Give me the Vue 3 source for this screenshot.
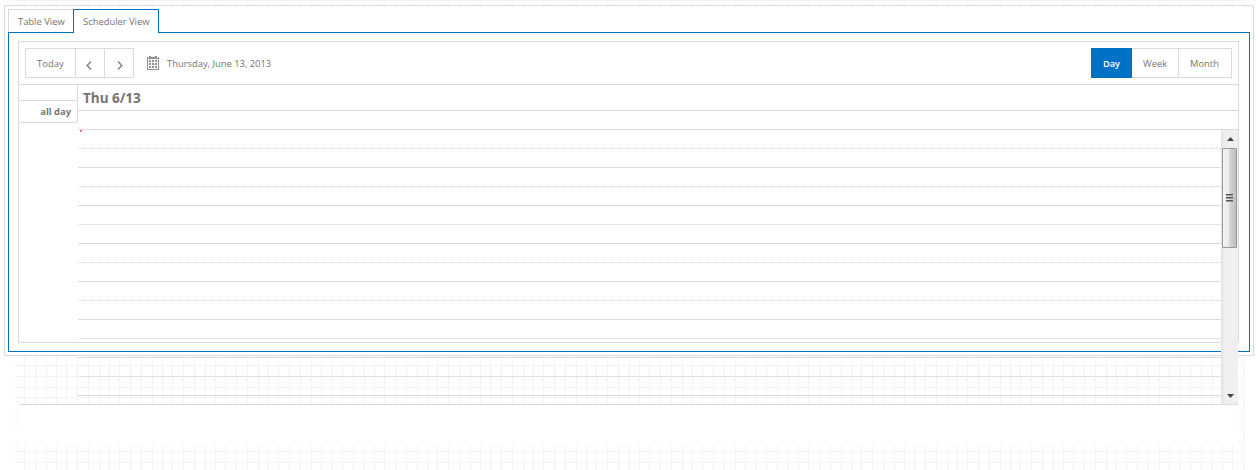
<script setup>
import { reactive } from 'vue'

const state = reactive({
  tab: 'Scheduler View',
  view: 'Day'
})

const tabs = ['Table View', 'Scheduler View']
const views = ['Day', 'Week', 'Month']

// uneven cell offsets of the background grid
const columns = [0, 11, 22, 32, 42]
const lines = [0, 11, 22, 32]
</script>

<template>
  <div class="page">
    <svg class="grid" width="1230" height="470" shape-rendering="crispEdges">
      <defs>
        <pattern id="cols" x="10" y="0" width="53" height="470" patternUnits="userSpaceOnUse">
          <rect v-for="x in columns" :key="x" :x="x" width="1" height="470" />
        </pattern>
        <pattern id="rows" x="0" y="-22" width="1230" height="43" patternUnits="userSpaceOnUse">
          <rect v-for="y in lines" :key="y" :y="y" width="1230" height="1" />
        </pattern>
      </defs>
      <rect width="1230" height="470" fill="url(#rows)" />
      <rect width="1230" height="470" fill="url(#cols)" />
    </svg>

    <div class="tabstrip">
      <div class="tabs">
        <div
          v-for="tab in tabs"
          :key="tab"
          class="tab"
          :class="{ active: tab === state.tab }"
          @click="state.tab = tab"
        ><span class="text">{{ tab }}</span></div>
      </div>

      <div class="tab-content">
        <div class="scheduler">
          <div class="toolbar">
            <div class="nav">
              <div class="today"><span class="text">Today</span></div>
              <div class="arrow prev">
                <svg width="6" height="9"><path d="M5 .6 1.2 4.5 5 8.4" /></svg>
              </div>
              <div class="arrow next">
                <svg width="6" height="9"><path d="M1 .6 4.8 4.5 1 8.4" /></svg>
              </div>
            </div>
            <svg class="calendar" width="12" height="14" shape-rendering="crispEdges">
              <path d="M0 1h1v13H0zM11 1h1v13h-1zM1 13h10v1H1zM1 2h10v1H1zM2 0h2v2H2zM8 0h2v2H8zM4 1h4v1H4z" />
              <path d="M2 4h2v2H2zM5 4h2v2H5zM8 4h2v2H8zM2 7h2v2H2zM5 7h2v2H5zM8 7h2v2H8zM2 10h2v2H2zM5 10h2v2H5zM8 10h2v2H8z" />
            </svg>
            <span class="date text">Thursday, June 13, 2013</span>
            <div class="views">
              <div
                v-for="view in views"
                :key="view"
                class="view"
                :class="[view.toLowerCase(), { selected: view === state.view }]"
                @click="state.view = view"
              ><span class="text">{{ view }}</span></div>
            </div>
          </div>

          <div class="body">
            <div class="times">
              <div class="corner"></div>
              <div class="all-day"><span class="text">all day</span></div>
            </div>
            <div class="days">
              <div class="day-header"><span class="text">Thu 6/13</span></div>
              <div class="all-day-slot"></div>
              <div class="content">
                <div class="slots">
                  <div v-for="n in 14" :key="n" class="slot"></div>
                  <div class="marker"></div>
                </div>
                <div class="scrollbar">
                  <svg class="up" width="7" height="4"><path d="M3.5 0 7 4H0z" /></svg>
                  <div class="thumb"><i></i><i></i><i></i></div>
                  <svg class="down" width="7" height="4"><path d="M0 0h7L3.5 4z" /></svg>
                </div>
              </div>
            </div>
          </div>
          <div class="footer"></div>
        </div>
      </div>
    </div>
  </div>
</template>

<style>
body {
  margin: 0;
  background: #fff;
}
</style>

<style scoped>
.page {
  position: relative;
  box-sizing: border-box;
  width: 1260px;
  height: 470px;
  padding: 5px 0 0 4px;
  overflow: hidden;
  font-family: 'Open Sans', 'Noto Sans', sans-serif;
  font-size: 9.4px;
  color: #747474;
}

.page * {
  box-sizing: border-box;
}

.text {
  white-space: nowrap;
}

/* background grid */
.grid {
  position: absolute;
  left: 14px;
  top: 0;
  fill: #f3f3f3;
}

.tabstrip {
  position: relative;
  width: 1250px;
  height: 351px;
  padding: 3px;
  border: 1px solid #dadada;
  background: #fff;
}

.tabs {
  position: relative;
  z-index: 1;
  display: flex;
  height: 24px;
}

.tab {
  width: 65px;
  height: 23px;
  padding-left: 9px;
  border: 1px solid #dadada;
  border-right: 0;
  border-bottom: 0;
  line-height: 23px;
}

.tab.active {
  width: 86px;
  height: 24px;
  border-color: #0072c6;
  border-right: 1px solid #0072c6;
  background: #fff;
}

.tab-content {
  width: 1242px;
  height: 320px;
  margin-top: -1px;
  padding: 8px 9px;
  border: 1px solid #0072c6;
}

.scheduler {
  width: 1221px;
  height: 302px;
  border: 1px solid #dadada;
}

/* toolbar */
.toolbar {
  display: flex;
  height: 43px;
  padding: 6px 6px 0;
  border-bottom: 1px solid #dadada;
}

.nav {
  display: flex;
  width: 109px;
  height: 30px;
  border: 1px solid #dadada;
  line-height: 30px;
}

.today {
  width: 49px;
  padding-left: 11px;
  font-size: 9.5px;
}

.arrow {
  display: flex;
  align-items: center;
  justify-content: center;
  width: 29px;
  padding-top: 4px;
  border-left: 1px solid #dadada;
}

.prev {
  padding-right: 2px;
}

.next {
  padding-left: 2px;
}

.arrow svg {
  fill: none;
  stroke: #808080;
  stroke-width: 1.4;
}

.calendar {
  margin: 8px 0 0 13px;
  fill: #909090;
}

.date {
  margin-left: 8px;
  line-height: 32px;
}

.views {
  display: flex;
  height: 30px;
  margin-left: auto;
  line-height: 30px;
  border: 1px solid #dadada;
  border-left: 0;
}

.view {
  height: 28px;
}

.day {
  width: 41px;
  padding-left: 12px;
}

.week {
  width: 46px;
  padding-left: 11px;
}

.month {
  width: 53px;
  padding-left: 11px;
  border-left: 1px solid #dadada;
}

.view.selected {
  height: 30px;
  margin-top: -1px;
  background: #0072c6;
  color: #fff;
  font-weight: 600;
  font-size: 9.2px;
  line-height: 32px;
}

/* day view */
.body {
  display: flex;
  width: 1219px;
  height: 320px;
  border-bottom: 1px solid #dadada;
}

.times {
  width: 59px;
  height: 38px;
  border-right: 1px solid #dadada;
}

.corner {
  height: 16px;
  border-bottom: 1px solid #dadada;
}

.all-day {
  height: 22px;
  padding-right: 6px;
  border-bottom: 1px solid #dadada;
  line-height: 21px;
  font-weight: bold;
  text-align: right;
}

.days {
  width: 1160px;
}

.day-header {
  height: 26px;
  padding-left: 5px;
  border-bottom: 1px solid #dadada;
  line-height: 26px;
  font-size: 13.5px;
  font-weight: bold;
}

.all-day-slot {
  height: 19px;
  border-bottom: 1px solid #dadada;
}

.content {
  display: flex;
  height: 274px;
}

.slots {
  position: relative;
  width: 1143px;
}

.slot {
  height: 19px;
  border-bottom: 1px solid #dadada;
}

.slot:nth-child(odd) {
  border-bottom: 1px dotted #d0d0d0;
}

.marker {
  position: absolute;
  left: 2px;
  top: 0;
  width: 2px;
  height: 2px;
  background: #e08080;
}

.scrollbar {
  display: flex;
  flex-direction: column;
  align-items: center;
  width: 17px;
  border-left: 1px solid #e3e3e3;
  background: linear-gradient(to right, #e8e8e8, #efefef 4px, #f0f0f0);
}

.scrollbar svg {
  fill: #444;
}

.up {
  margin-top: 7px;
}

.down {
  margin: auto 0 6px;
}

.thumb {
  display: flex;
  flex-direction: column;
  align-items: center;
  justify-content: center;
  gap: 1px;
  width: 15px;
  height: 100px;
  margin: 7px 1px 0 0;
  border: 1px solid #979797;
  border-radius: 1px;
  background: linear-gradient(to right, #f5f5f5, #e9e9eb 45%, #d1d1d4 55%, #c0c0c4);
}

.thumb i {
  width: 7px;
  height: 2px;
  border-top: 1px solid #555;
  border-bottom: 1px solid #999;
}

.footer {
  width: 1219px;
  height: 40px;
  background: #fff;
}
</style>
